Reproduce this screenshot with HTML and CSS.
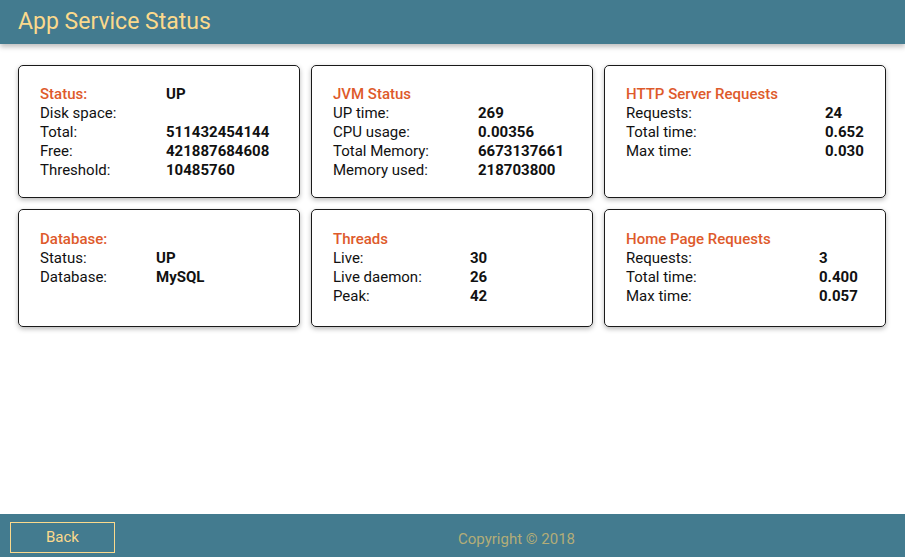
FILE: index.html
```html
<!DOCTYPE html>
<html>
<head>
<meta charset="utf-8">
<link rel="stylesheet" href="styles.css">
</head>
<body>
<header class="topbar"><h1 class="title">App Service Status</h1></header>
<main class="grid">
  <section class="card">
    <table class="stats c1">
      <tr><td class="head">Status:</td><td class="val">UP</td></tr>
      <tr><td>Disk space:</td><td></td></tr>
      <tr><td>Total:</td><td class="val">511432454144</td></tr>
      <tr><td>Free:</td><td class="val">421887684608</td></tr>
      <tr><td>Threshold:</td><td class="val">10485760</td></tr>
    </table>
  </section>
  <section class="card">
    <div class="head">JVM Status</div>
    <table class="stats c2">
      <tr><td>UP time:</td><td class="val">269</td></tr>
      <tr><td>CPU usage:</td><td class="val">0.00356</td></tr>
      <tr><td>Total Memory:</td><td class="val">6673137661</td></tr>
      <tr><td>Memory used:</td><td class="val">218703800</td></tr>
    </table>
  </section>
  <section class="card">
    <div class="head">HTTP Server Requests</div>
    <table class="stats c3">
      <tr><td>Requests:</td><td class="val">24</td></tr>
      <tr><td>Total time:</td><td class="val">0.652</td></tr>
      <tr><td>Max time:</td><td class="val">0.030</td></tr>
    </table>
  </section>
  <section class="card row2">
    <div class="head">Database:</div>
    <table class="stats c4">
      <tr><td>Status:</td><td class="val">UP</td></tr>
      <tr><td>Database:</td><td class="val">MySQL</td></tr>
    </table>
  </section>
  <section class="card row2">
    <div class="head">Threads</div>
    <table class="stats c5">
      <tr><td>Live:</td><td class="val">30</td></tr>
      <tr><td>Live daemon:</td><td class="val">26</td></tr>
      <tr><td>Peak:</td><td class="val">42</td></tr>
    </table>
  </section>
  <section class="card row2">
    <div class="head">Home Page Requests</div>
    <table class="stats c6">
      <tr><td>Requests:</td><td class="val">3</td></tr>
      <tr><td>Total time:</td><td class="val">0.400</td></tr>
      <tr><td>Max time:</td><td class="val">0.057</td></tr>
    </table>
  </section>
</main>
<footer class="footbar">
  <button class="back">Back</button>
  <div class="copy">Copyright © 2018</div>
</footer>
</body>
</html>
```
FILE: styles.css
```css
* { box-sizing: border-box; }
html, body { margin: 0; padding: 0; }
body {
  font-family: Roboto, "Liberation Sans", sans-serif;
  font-size: 15px;
  color: #111;
  background: #fff;
  height: 557px;
  overflow: hidden;
}
.topbar {
  height: 44px;
  background: #437b8f;
  box-shadow: 0 3px 5px rgba(0,0,0,0.25);
  display: flex;
  align-items: center;
  padding-left: 18px;
}
.title {
  margin: 0;
  font-weight: 400;
  font-size: 23px;
  color: #fbd98c;
  line-height: 1;
  padding-bottom: 1px;
}
.grid {
  display: grid;
  grid-template-columns: repeat(3, 282px);
  grid-template-rows: 133px 118px;
  column-gap: 11px;
  row-gap: 11px;
  padding: 21px 0 0 18px;
}
.card {
  border: 1px solid #1a1a1a;
  border-radius: 5px;
  box-shadow: 0 2px 5px rgba(0,0,0,0.28);
  padding: 19px 10px 10px 21px;
  line-height: 19px;
}
.card.row2 { padding-top: 20px; }
.head {
  color: #de5a2b;
  font-weight: 500;
}
.stats {
  border-collapse: collapse;
  border-spacing: 0;
}
.stats td {
  padding: 0;
  height: 19px;
  line-height: 19px;
  vertical-align: middle;
  white-space: nowrap;
}
.stats td.val { font-weight: 700; }
.stats td.head { font-weight: 500; }
.c1 td:first-child { width: 126px; }
.c2 td:first-child { width: 145px; }
.c3 td:first-child { width: 199px; }
.c4 td:first-child { width: 116px; }
.c5 td:first-child { width: 137px; }
.c6 td:first-child { width: 193px; }
.footbar {
  position: fixed;
  left: 0; right: 0; bottom: 0;
  height: 43px;
  background: #437b8f;
  display: flex;
  align-items: center;
  padding-left: 10px;
}
.back {
  width: 105px;
  height: 31px;
  margin-top: 3px;
  background: transparent;
  border: 1px solid #fbd98c;
  color: #fbd98c;
  font-family: Roboto, "Liberation Sans", sans-serif;
  font-size: 15px;
  padding: 0;
}
.copy {
  position: absolute;
  left: 0; right: 0;
  text-align: center;
  pointer-events: none;
  color: #b3ad78;
  font-size: 15px;
  padding-left: 128px;
  top: 16px;
}
```
